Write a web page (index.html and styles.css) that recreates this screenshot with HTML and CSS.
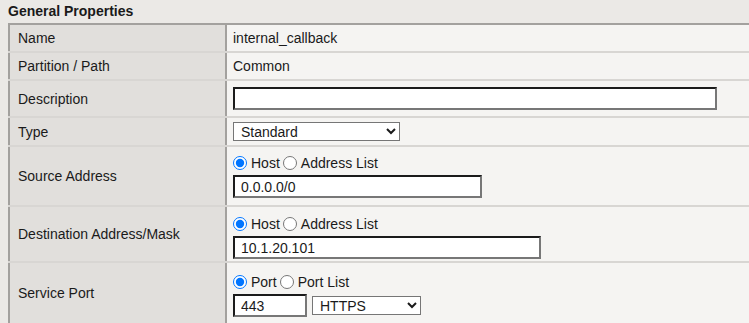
FILE: index.html
```html
<!DOCTYPE html>
<html lang="en">
<head>
    <meta charset="UTF-8">
    <meta name="viewport" content="width=device-width, initial-scale=1.0">
    <title>General Properties</title>
    <link rel="stylesheet" href="styles.css">
</head>
<body>
    <div class="title">General Properties</div>
    <table class="props">
        <tr class="row-name">
            <td class="label">Name</td>
            <td class="value">internal_callback</td>
        </tr>
        <tr class="row-name">
            <td class="label">Partition / Path</td>
            <td class="value">Common</td>
        </tr>
        <tr class="row-desc">
            <td class="label">Description</td>
            <td class="value"><input type="text" class="field field-desc"></td>
        </tr>
        <tr class="row-type">
            <td class="label">Type</td>
            <td class="value">
                <select class="dropdown dropdown-type">
                    <option>Standard</option>
                </select>
            </td>
        </tr>
        <tr class="row-src">
            <td class="label">Source Address</td>
            <td class="value">
                <div class="radios">
                    <input type="radio" name="src" checked><span>Host</span>
                    <input type="radio" name="src"><span>Address List</span>
                </div>
                <input type="text" class="field field-src" value="0.0.0.0/0">
            </td>
        </tr>
        <tr class="row-dst">
            <td class="label">Destination Address/Mask</td>
            <td class="value">
                <div class="radios">
                    <input type="radio" name="dst" checked><span>Host</span>
                    <input type="radio" name="dst"><span>Address List</span>
                </div>
                <input type="text" class="field field-dst" value="10.1.20.101">
            </td>
        </tr>
        <tr class="row-port">
            <td class="label">Service Port</td>
            <td class="value">
                <div class="radios">
                    <input type="radio" name="port" checked><span>Port</span>
                    <input type="radio" name="port"><span>Port List</span>
                </div>
                <div class="port-line">
                    <input type="text" class="field field-port" value="443">
                    <select class="dropdown dropdown-port">
                        <option>HTTPS</option>
                    </select>
                </div>
            </td>
        </tr>
    </table>
</body>
</html>
```

FILE: styles.css
```css
body {
    margin: 0;
    padding: 2px 0 0 8px;
    background-color: #ebe9e6;
    font-family: "Liberation Sans", Arial, sans-serif;
    font-size: 14px;
    color: #1a1a1a;
    overflow: hidden;
}
.title {
    font-weight: bold;
    height: 21px;
    line-height: 18px;
}
.props {
    width: 741px;
    border-collapse: collapse;
    border: 2px solid #a3a19e;
    border-right: none;
}
.props td {
    border-bottom: 2px solid #d8d6d3;
    padding: 0;
    vertical-align: middle;
}
.props .label {
    width: 207px;
    padding-left: 8px;
    background-color: #e1dfdc;
    border-right: 2px solid #a3a19e;
}
.props .value {
    padding-left: 6px;
    background-color: #f5f4f2;
}
.row-name td {
    height: 26px;
}
.row-desc td {
    height: 35px;
}
.row-type td {
    height: 27px;
}
.row-src td {
    height: 58px;
}
.row-dst td {
    height: 54px;
}
.row-port td {
    height: 60px;
    border-bottom: none;
}
.row-src .value,
.row-dst .value,
.row-port .value {
    vertical-align: top;
    box-sizing: border-box;
}
.row-src .value {
    padding-top: 8px;
}
.row-dst .value {
    padding-top: 9px;
}
.row-port .value {
    padding-top: 11px;
}
.field {
    box-sizing: border-box;
    height: 23px;
    margin: 0;
    padding: 0 6px;
    font-family: "Liberation Sans", Arial, sans-serif;
    font-size: 14px;
    color: #1a1a1a;
    background: #fff;
    border: 2px solid;
    border-color: #1b1b1b #777 #777 #1b1b1b;
    border-radius: 0;
    outline: none;
}
.field-desc {
    width: 484px;
}
.field-src {
    width: 249px;
}
.field-dst {
    width: 308px;
}
.field-port {
    width: 74px;
}
.dropdown {
    box-sizing: border-box;
    height: 19px;
    margin: 0;
    padding: 0 0 0 3px;
    font-family: "Liberation Sans", Arial, sans-serif;
    font-size: 14px;
    color: #1a1a1a;
    background: #fff;
    border: 1px solid #767676;
    border-radius: 0;
}
.dropdown-type {
    width: 167px;
}
.dropdown-port {
    width: 109px;
    margin-left: 5px;
    margin-top: 2px;
}
.radios {
    display: flex;
    align-items: center;
    height: 16px;
    margin-bottom: 4px;
}
.radios input {
    width: 14px;
    height: 14px;
    margin: 0 4px 0 0;
}
.radios span {
    margin-right: 3px;
}
.port-line {
    display: flex;
    align-items: flex-start;
}
```
